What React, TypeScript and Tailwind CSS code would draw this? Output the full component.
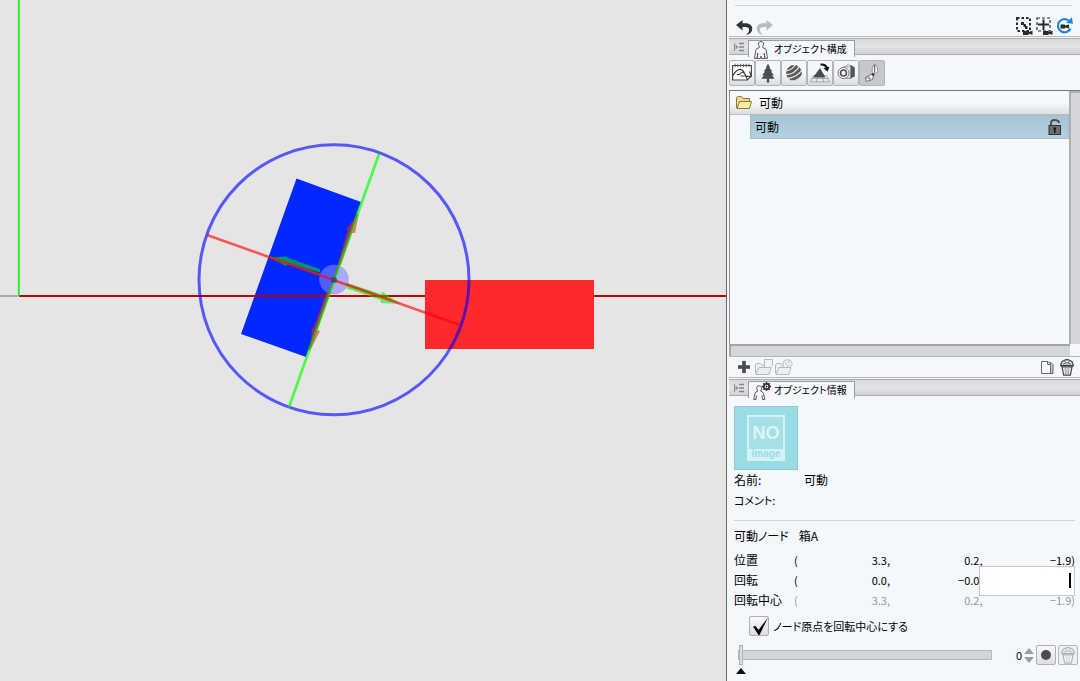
import { useState } from "react";
import type { ReactNode } from "react";
import clsx from "clsx";

type Axis3 = [string, string, string];

type IconProps = {
  className?: string;
};

const UndoIcon = ({ className }: IconProps) => (
  <svg viewBox="0 0 17 15" className={clsx("h-[15px] w-[17px]", className)} aria-hidden="true">
    <path d="M0 5 6.500 0v3.200h3.200c4 0 6.600 2.300 6.600 5.600 0 2.900-2 5.200-4.800 5.800H9.300c2.500-.9 3.800-2.600 3.800-4.700 0-1.900-1.300-2.900-3.700-2.900H6.500v3.500z" fill="currentColor" />
  </svg>
);

const CameraTag = () => <path d="M7 14h5.500v1l4-1.200v4l-4-1v1.200H7z" fill="#2b2b2b" />;

const FitSelectionIcon = () => (
  <svg viewBox="0 0 18 18" className="h-[18px] w-[18px]" aria-hidden="true">
    <rect x="1" y="1" width="13" height="13" fill="none" stroke="#2b2b2b" strokeWidth="2" strokeDasharray="2.500 2" />
    <path d="M5 5h3v2h2v2h1.500v3H9v-2H7.500V8H5z" fill="#2b2b2b" />
    <CameraTag />
  </svg>
);

const FitAllIcon = () => (
  <svg viewBox="0 0 18 18" className="h-[18px] w-[18px]" aria-hidden="true">
    <rect x="1" y="1" width="13" height="13" fill="none" stroke="#2b2b2b" strokeWidth="1.200" strokeDasharray="3 2" />
    <path d="M7.500 2.500v10.500M2 7.500h11" stroke="#2b2b2b" strokeWidth="2" />
    <CameraTag />
  </svg>
);

const ResetCameraIcon = () => (
  <svg viewBox="0 0 18 18" className="h-[18px] w-[18px]" aria-hidden="true">
    <path d="M12.500 3.500A6.600 6.600 0 1 0 14.500 11.500" fill="none" stroke="#2485d8" strokeWidth="2.200" />
    <path d="m10 6 7 .8L15.800.2z" fill="#2485d8" />
    <path d="M4.500 7.500h4.500v1l4-1v4l-4-1v1H4.500z" fill="#2b2b2b" />
  </svg>
);

const PanelMenuIcon = () => (
  <svg viewBox="0 0 10 10" className="h-2.5 w-2.5" aria-hidden="true">
    <path d="M.5 1v8" stroke="#8d8f92" />
    <path d="m1.500 2.500 3 2.500-3 2.500z" fill="#8d8f92" />
    <path d="M5 1.500h5M5 5h5M5 8.500h5" stroke="#85878a" strokeWidth="1.600" />
  </svg>
);

const FigureIcon = () => (
  <svg viewBox="0 0 16 18" className="h-[18px] w-4" aria-hidden="true">
    <path
      d="M4 17.500H1.500L2.700 9.500Q3 7.300 6.300 6.600L6.300 5.300Q4.900 3.800 5.500 2 6.200.5 8 .5T10.500 2Q11.100 3.800 9.700 5.300L9.700 6.600Q13 7.300 13.300 9.500L14.500 17.500H12L11.200 12 11.700 17.500H8.700L8 15 7.300 17.500H4.300L4.800 12Z"
      fill="#f6f6f6"
      stroke="#5a5a5a"
    />
  </svg>
);

const FigureGearIcon = () => (
  <svg viewBox="0 0 18 18" className="h-[18px] w-[18px]" aria-hidden="true">
    <path
      d="M3 17.500H.7L2 11.500Q2.500 9.700 5 9 3.200 7 3.800 5.200 4.500 3.700 6.200 3.700T8.600 5.200Q9.200 7 7.500 9 10 9.700 10.500 11.500L11.800 17.500H9.500L9 13.500M3.500 13.500 3 17.500"
      fill="#f6f6f6"
      stroke="#5a5a5a"
    />
    <circle cx="13.500" cy="4.500" r="2.700" fill="none" stroke="#2a2a2a" strokeWidth="1.400" />
    <circle cx="13.500" cy="4.500" r="1" fill="#2a2a2a" />
    <path d="M13.500 0v2.500M13.500 6.500v2.500M9 4.500h2.500M15.500 4.500h2.500M10.300 1.300l1.700 1.700M15 6l1.700 1.700M16.700 1.300 15 3M12 6l-1.700 1.700" stroke="#2a2a2a" strokeWidth="1.400" />
  </svg>
);

const CanvasIcon = () => (
  <svg viewBox="0 0 20 20" className="h-5 w-5 shrink-0" aria-hidden="true">
    <path d="M.6 2.500h18.800v10.500l-4 4H.6z" fill="#fff" stroke="#4b4b4b" strokeWidth="1.200" />
    <path d="M3 .8v3.400M5.800.8v3.400M8.600.8v3.400M11.400.8v3.400M14.200.8v3.400M17 .8v3.400" stroke="#4b4b4b" strokeWidth=".9" />
    <path d="M1 12.500Q4 7 7.500 6.300 11 6 12.500 10.500 10 8 8.500 10.500 7.500 12 5 11.500M12.500 10.500 14 13H8.500M15.400 17 14 13Q17 14 19.400 13L17.500 8.500" fill="none" stroke="#3b3b3b" strokeWidth="1.200" />
  </svg>
);

const TreeIcon = () => (
  <svg viewBox="0 0 20 20" className="h-5 w-5 shrink-0" aria-hidden="true">
    <path d="m10 .5 2.200 4.300-1-.2 3.300 4-1.800-.3 3.300 4-2-.2 2.500 3.700H11.200v3.700H8.800v-3.700H3.500L6 12.100l-2 .2 3.300-4-1.800.3 3.300-4-1 .2z" fill="#4b4f4f" />
  </svg>
);

const SphereIcon = () => (
  <svg viewBox="0 0 20 20" className="h-5 w-5 shrink-0" aria-hidden="true">
    <circle cx="10" cy="10" r="7.900" fill="#585858" />
    <path d="M1 7.500Q7 8.500 12 1M1.500 11.500Q10.500 12 15.500 3M3.500 15.500Q14 14 18.500 6M7.500 18.500Q16 17 19 11" fill="none" stroke="#ececef" strokeWidth="1.300" />
  </svg>
);

const TerrainIcon = () => (
  <svg viewBox="0 0 20 20" className="h-5 w-5 shrink-0" aria-hidden="true">
    <path d="M3.500 12.500h13l3 6.500H0zM2 15.500h16M7.800 12.500 6.500 19M12.200 12.500l1.300 6.500" fill="none" stroke="#96989b" strokeWidth=".8" />
    <path d="m10 5 5.500 9.500H3z" fill="#4b4b4b" />
    <path d="M10.500 1.500Q15.500 1 17 5" fill="none" stroke="#111" strokeWidth="2" />
    <path d="m13.500 5 6-1.200-2 5z" fill="#111" />
  </svg>
);

const CameraIcon = () => (
  <svg viewBox="0 0 20 20" className="h-5 w-5 shrink-0" aria-hidden="true">
    <path d="M6 4.500 15 2.500v13L7 15z" fill="#e4e5e7" stroke="#88898b" />
    <path d="M14.500 2.500h1.500l2.800 2v9l-4.300 2z" fill="#55575a" />
    <path d="m9.500 3.500 3-2.500 1.500 2" fill="#f1f1f1" stroke="#999" strokeWidth=".8" />
    <circle cx="7.500" cy="10" r="5.500" fill="#fff" stroke="#77797b" />
    <circle cx="7.500" cy="10" r="3" fill="#f4f4f6" stroke="#4c4c4c" strokeWidth="1.600" />
  </svg>
);

const MovableIcon = () => (
  <svg viewBox="0 0 20 20" className="h-5 w-5 shrink-0" aria-hidden="true">
    <path d="M12.500.8Q16.500 5 15.800 8.500L13 11.500 10 9.500Q9.500 4.500 12.500.8z" fill="#f8f9fa" stroke="#77797c" strokeWidth=".8" />
    <path d="M12.700 2v8" stroke="#4f5154" />
    <path d="M9.500 11 11.500 13 10.500 16.500 4 18.500 3.500 14.500z" fill="#f1f2f4" stroke="#66686a" strokeWidth=".9" />
    <circle cx="11" cy="11.500" r="1.400" fill="#3f4144" />
    <path d="m4 14.500 3 1 1.500 2M6.500 13l2 3" fill="none" stroke="#66686a" strokeWidth=".8" />
  </svg>
);

const FolderIcon = () => (
  <svg viewBox="0 0 16 13" className="h-[13px] w-4" aria-hidden="true">
    <path d="M.5 12V2L1.500.6h4L7 2.500h6.500V6" fill="#f1d987" stroke="#87764a" />
    <path d="m1 12.500 2.500-7h12L13.500 12.500z" fill="#fcec9e" stroke="#87764a" />
  </svg>
);

const LockIcon = () => (
  <svg viewBox="0 0 14 16" className="h-4 w-3.5" aria-hidden="true">
    <path d="M3 7V3.500Q3 1 6.500 1T11.500 3.800" fill="none" stroke="#454b4e" strokeWidth="1.800" />
    <rect x="1" y="6.500" width="11.500" height="9" fill="#6b6d6e" stroke="#333" />
    <path d="M5.500 8.500h2.500v2H7.500v3.500h-1.500v-3.500H5.500z" fill="#161616" />
  </svg>
);

const PlusIcon = () => (
  <svg viewBox="0 0 12 12" className="h-3 w-3" aria-hidden="true">
    <path d="M6 0v12M0 6h12" stroke="#4a4c4e" strokeWidth="3.600" />
  </svg>
);

const FolderAddIcon = ({ palette }: { palette?: boolean }) => (
  <svg viewBox="0 0 18 16" className="h-4 w-[18px]" aria-hidden="true">
    <path d="M.5 14.500V6l1-1.500h4L7 6h7v2M1 15.500 4 8.500h12l-2 7z" fill="#eceef1" stroke="#b6b9bc" />
    {palette ? (
      <g stroke="#b6b9bc">
        <path d="M8 7Q7 .8 12.500.8 17.500 1 17 5.500 15.500 8 14 8.500H9z" fill="#f1f3f5" />
        <path d="M10 4.500h1.500M13 3h1.500M12 6.500h1.500" strokeWidth="1.500" />
      </g>
    ) : (
      <path d="M9.500.5h8v6l-2 2h-6z" fill="#f1f3f5" stroke="#b6b9bc" />
    )}
  </svg>
);

const DuplicateIcon = () => (
  <svg viewBox="0 0 13 13" className="h-[13px] w-[13px]" aria-hidden="true">
    <path d="M7.500 1.500h2.500l2 2v9H7.500z" fill="#c8cacc" stroke="#66696b" />
    <path d="M.5.500h6.500l2.500 2.500v9.500H.5z" fill="#fafafa" stroke="#66696b" />
    <path d="M6.500.500v3h3" fill="none" stroke="#66696b" />
  </svg>
);

const TrashIcon = ({ className }: IconProps) => (
  <svg viewBox="0 0 14 17" className={clsx("h-[17px] w-3.5", className)} aria-hidden="true">
    <path d="M.8 6.300Q1 2.500 4.500 1.300 7-.2 9.500 1.300 13 2.500 13.200 6.300z" fill="#f0f0f0" stroke="currentColor" strokeWidth="1.200" />
    <path d="M3 5Q7 2.500 11 5M4.500 2l1.500 2M9.500 2 8 4" fill="none" stroke="currentColor" strokeWidth=".8" />
    <path d="m2 8 1.700 8.200h6.600L12 8z" fill="#f6f6f6" stroke="currentColor" strokeWidth="1.200" />
    <path d="M.5 7h13" stroke="currentColor" strokeWidth="1.300" />
    <path d="m5 9 .5 6M7 9v6M9 9l-.5 6" stroke="currentColor" strokeWidth=".5" />
  </svg>
);

const categories = [
  { key: "canvas", label: "用紙", icon: <CanvasIcon /> },
  { key: "object", label: "オブジェクト", icon: <TreeIcon /> },
  { key: "material", label: "マテリアル", icon: <SphereIcon /> },
  { key: "layout", label: "レイアウト", icon: <TerrainIcon /> },
  { key: "camera", label: "アングル", icon: <CameraIcon /> },
  { key: "movable", label: "可動", icon: <MovableIcon /> },
];

const Viewport = () => (
  <main className="min-w-0 flex-1 overflow-hidden bg-[#e5e5e5]">
    <svg width="100%" height="681" className="block" role="img" aria-label="3D">
      <path d="M0 296h18" stroke="#a9a9a9" strokeWidth="2" />
      <polygon points="296.500,178.500 361,202 306,357 241,334" fill="#0028ff" />
      <line x1="19" y1="296" x2="100%" y2="296" stroke="#be0000" strokeWidth="2" />
      <path d="M18.800 0v296" stroke="#1cf01c" strokeWidth="1.800" />
      <rect x="425" y="280" width="169" height="69" fill="#ff282c" />
      <circle cx="334" cy="279.800" r="135" fill="none" stroke="#0000ff" strokeOpacity=".62" strokeWidth="3" />
      <circle cx="334" cy="279.500" r="14.800" fill="#8080ff" fillOpacity=".6" />

      <g fill="#00e800" fillOpacity=".55">
        <path d="m320 272.500-33-10v4l-18-9 18-1v1l33 11.500z" />
        <path d="m347 283 34 11 1-2.500L401 304l-20-1-.5-3-34-11.500z" />
      </g>
      <g fill="#ff2020" fillOpacity=".6">
        <path d="m337.500 265 10-34-1-2L359 213l-4 20h-3l-11 32z" />
        <path d="m327 291-14 38-1-2-2 24 10-20-3-1 14-39z" />
      </g>
      <path d="m207 235 253 90" stroke="#ff0000" strokeOpacity=".62" strokeWidth="2.600" />
      <path d="m379 154-90 253" stroke="#00ff00" strokeOpacity=".65" strokeWidth="2.800" />
      <path d="m357 214-48 136" stroke="#50780a" strokeOpacity=".6" strokeWidth="1.800" />
      <path d="m270 257 51 18M346 284l45 16" stroke="#c04000" strokeOpacity=".6" strokeWidth="2" />
      <circle cx="334" cy="280" r="3" fill="#343070" fillOpacity=".7" />
    </svg>
  </main>
);

const PanelTab = ({ icon, title }: { icon: ReactNode; title: string }) => (
  <header className="mt-px flex h-[17px] border-y border-[#a9abae] bg-linear-to-b from-[#d9d9db] via-[#e3e3e5] to-[#d2d2d4]">
    <button type="button" aria-label="メニュー" className="flex w-[19px] items-center justify-center">
      <PanelMenuIcon />
    </button>
    <h2 className="mt-px flex h-[17px] w-[107px] items-start gap-0.5 border border-b-0 border-[#9c9ea1] bg-[#f4f7fc] pl-1 text-[10px] leading-4 whitespace-nowrap">
      <span className="w-[19px] shrink-0">{icon}</span>
      {title}
    </h2>
  </header>
);

const IconButton = ({ label, children, disabled }: { label: string; children: ReactNode; disabled?: boolean }) => (
  <button type="button" aria-label={label} disabled={disabled}>
    {children}
  </button>
);

const StructurePanel = () => {
  const [category, setCategory] = useState("movable");

  return (
    <section className="flex flex-1 flex-col">
      <PanelTab icon={<FigureIcon />} title="オブジェクト構成" />
      <div className="mt-[5px] flex">
        {categories.map((item) => (
          <button
            key={item.key}
            type="button"
            aria-label={item.label}
            aria-pressed={category === item.key}
            onClick={() => setCategory(item.key)}
            className={clsx(
              "flex h-[26px] w-[26px] items-center justify-center rounded-xs border border-[#b2b4b8]",
              category === item.key ? "bg-[#c6c8ce]" : "bg-linear-to-b from-[#f4f7fc] from-50% to-[#dcdde1]",
            )}
          >
            {item.icon}
          </button>
        ))}
      </div>

      <div className="mt-1 flex flex-1 border-t border-[#75797d]">
        <ul className="flex-1 border-l border-[#8d9195]">
          <li>
            <button type="button" className="flex h-6 w-full items-center gap-[7px] border-b border-[#bcbec2] bg-linear-to-b from-[#f5f8fd] from-50% to-[#dcdde1] pl-1.5">
              <FolderIcon />
              可動
            </button>
            <ul className="pl-5">
              <li className="flex h-6 items-center justify-between border border-[#9fbfce] bg-linear-to-b from-[#a6c4d4] to-[#b5d0e0] pr-1.5 pl-1">
                <button type="button">可動</button>
                <IconButton label="ロック">
                  <LockIcon />
                </IconButton>
              </li>
            </ul>
          </li>
        </ul>
        <div className="w-[11px] border-t-2 border-l-2 border-[#aeb0b4] bg-[#d5d6db]" />
      </div>
      <div className="mr-2.5 h-3 border-t-2 border-l-2 border-[#a2a4a8] bg-[#d5d6db]" />
      <div className="flex h-[21px] items-center gap-1 border-t border-[#b4b6b9] pr-1.5 pl-[9px]">
        <IconButton label="追加">
          <PlusIcon />
        </IconButton>
        <div className="flex flex-1 gap-0.5 pl-px">
          <IconButton label="フォルダー追加" disabled>
            <FolderAddIcon />
          </IconButton>
          <IconButton label="素材追加" disabled>
            <FolderAddIcon palette />
          </IconButton>
        </div>
        <IconButton label="複製">
          <DuplicateIcon />
        </IconButton>
        <div className="flex pl-0.5">
          <IconButton label="削除">
            <TrashIcon className="text-[#404244]" />
          </IconButton>
        </div>
      </div>
    </section>
  );
};

const VectorRow = ({ label, values, muted, editing }: { label: string; values: Axis3; muted?: boolean; editing?: boolean }) => (
  <div className="relative grid h-5 grid-cols-[60px_96px_1fr_1fr] items-center">
    <span className="whitespace-nowrap">{label}</span>
    <span className={clsx("flex justify-between text-[11px]", muted && "text-[#96999d]")}>
      <span>(</span>
      <span>{values[0]},</span>
    </span>
    <span className={clsx("text-right text-[11px]", muted && "text-[#96999d]")}>{values[1]},</span>
    {editing ? (
      <span className="absolute -top-1 right-0 z-10 h-[30px] w-24">
        <input
          type="text"
          aria-label={`${label} Z`}
          className="h-full w-full border border-[#c5c7ca] bg-white px-2 text-right caret-transparent outline-none"
        />
        <span className="absolute top-[7px] right-1 h-[15px] w-0.5 bg-black" />
      </span>
    ) : (
      <span className={clsx("text-right text-[11px]", muted && "text-[#96999d]")}>{values[2]})</span>
    )}
  </div>
);

const InfoPanel = () => {
  const [pivot, setPivot] = useState(true);
  const [frame, setFrame] = useState(0);

  return (
    <section className="border-t border-[#b5b7ba]">
      <PanelTab icon={<FigureGearIcon />} title="オブジェクト情報" />
      <div className="pt-2.5 pr-[5px] pl-[5px]">
        <div className="flex h-16 w-16 items-center justify-center border border-[#8ec8d0] bg-[#99dce4]">
          <div className="flex h-[46px] w-[38px] flex-col items-center border-2 border-[#d4f2f5] bg-[#a5e0e7] font-['Liberation_Sans',sans-serif] font-bold">
            <span className="flex-1 text-lg leading-8 text-[#dcf6f8]">NO</span>
            <span className="w-full bg-[#d4f2f5] text-center text-[10px] leading-[10px] text-[#99dce4]">image</span>
          </div>
        </div>
        <dl className="grid grid-cols-[70px_1fr] leading-5">
          <dt>名前:</dt>
          <dd>可動</dd>
          <dt className="text-[11px]">コメント:</dt>
          <dd />
        </dl>
        <hr className="mt-2.5 border-[#d0d3d7]" />
        <p className="mt-[5px] flex gap-2.5 leading-5">
          <span>可動ノード</span>
          <span>箱A</span>
        </p>
        <div className="mt-1">
          <VectorRow label="位置" values={["3.3", "0.2", "−1.9"]} />
          <VectorRow label="回転" values={["0.0", "−0.0", ""]} editing />
          <VectorRow label="回転中心" values={["3.3", "0.2", "−1.9"]} muted />
        </div>
        <div className="flex h-8 items-center gap-1 pl-[15px]">
          <span className="relative flex">
            <input
              id="pivot"
              type="checkbox"
              checked={pivot}
              onChange={(event) => setPivot(event.target.checked)}
              className="h-5 w-5 appearance-none rounded-xs border border-[#aeb0b4] bg-linear-to-b from-[#f8f9fb] to-[#dddee2]"
            />
            {pivot ? (
              <svg viewBox="0 0 20 20" className="pointer-events-none absolute inset-0 h-5 w-5" aria-hidden="true">
                <path d="m4 10.500 2.500-.5 3 4L19 1.500 10.500 19H9.500z" fill="#000" />
              </svg>
            ) : null}
          </span>
          <label htmlFor="pivot" className="text-[11px]">ノード原点を回転中心にする</label>
        </div>
        <div className="flex h-[26px] items-center pl-1">
          <input
            type="range"
            aria-label="フレーム"
            min={0}
            max={100}
            value={frame}
            onChange={(event) => setFrame(Number(event.target.value))}
            className="h-5 min-w-0 flex-1 appearance-none bg-transparent [&::-webkit-slider-runnable-track]:h-2.5 [&::-webkit-slider-runnable-track]:border [&::-webkit-slider-runnable-track]:border-[#b5b7ba] [&::-webkit-slider-runnable-track]:bg-[#d4d5d9] [&::-webkit-slider-thumb]:-mt-1.5 [&::-webkit-slider-thumb]:h-5 [&::-webkit-slider-thumb]:w-1 [&::-webkit-slider-thumb]:appearance-none [&::-webkit-slider-thumb]:border [&::-webkit-slider-thumb]:border-[#b0b2b5] [&::-webkit-slider-thumb]:bg-[#dcdde1]"
          />
          <output className="w-[30px] text-right text-[11px]">{frame}</output>
          <div className="mr-0.5 ml-0.5 flex flex-col gap-[3px]">
            <button type="button" aria-label="増やす" onClick={() => setFrame(Math.min(100, frame + 1))}>
              <svg viewBox="0 0 10 6" className="h-1.5 w-2.5" aria-hidden="true">
                <path d="m5 0 5 6H0z" fill="#9a9da1" />
              </svg>
            </button>
            <button type="button" aria-label="減らす" onClick={() => setFrame(Math.max(0, frame - 1))}>
              <svg viewBox="0 0 10 6" className="h-1.5 w-2.5" aria-hidden="true">
                <path d="m5 6 5-6H0z" fill="#9a9da1" />
              </svg>
            </button>
          </div>
          <div className="-mr-[3px] flex gap-0.5">
            <button type="button" aria-label="記録" className="flex h-5 w-5 items-center justify-center rounded-xs border border-[#aeb0b4] bg-linear-to-b from-[#f8f9fb] to-[#dddee2]">
              <span className="h-2.5 w-2.5 rounded-full bg-[#4c4c4c]" />
            </button>
            <button type="button" disabled aria-label="キー削除" className="flex h-5 w-5 items-center justify-center rounded-xs border border-[#b5b7ba] bg-[#eef0f4]">
              <TrashIcon className="text-[#b0b2b5]" />
            </button>
          </div>
        </div>
        <svg viewBox="0 0 10 6" className="mb-[7px] ml-0.5 block h-1.5 w-2.5" aria-hidden="true">
          <path d="m5 0 5 6H0z" fill="#111" />
        </svg>
      </div>
    </section>
  );
};

export default function App() {
  return (
    <div className="flex min-h-screen bg-[#f4f7fc] font-['Noto_Sans_CJK_JP',sans-serif] text-xs leading-4 text-black [font-feature-settings:'palt']">
      <Viewport />
      <aside className="flex w-[354px] shrink-0 flex-col border-l border-[#66686b] pl-0.5">
        <div className="border-b border-[#b5b7ba] pt-[5px]">
          <hr className="mr-2 ml-1.5 border-[#d0d3d7]" />
          <div className="flex h-[30px] items-end gap-0.5 pr-1.5 pb-px pl-[7px]">
            <IconButton label="取り消し">
              <UndoIcon className="text-[#333]" />
            </IconButton>
            <div className="flex flex-1 pl-px">
              <IconButton label="やり直し" disabled>
                <UndoIcon className="-scale-x-100 text-[#b9bcbf]" />
              </IconButton>
            </div>
            <IconButton label="選択を注視">
              <FitSelectionIcon />
            </IconButton>
            <IconButton label="全体を注視">
              <FitAllIcon />
            </IconButton>
            <IconButton label="カメラをリセット">
              <ResetCameraIcon />
            </IconButton>
          </div>
        </div>
        <StructurePanel />
        <InfoPanel />
      </aside>
    </div>
  );
}
